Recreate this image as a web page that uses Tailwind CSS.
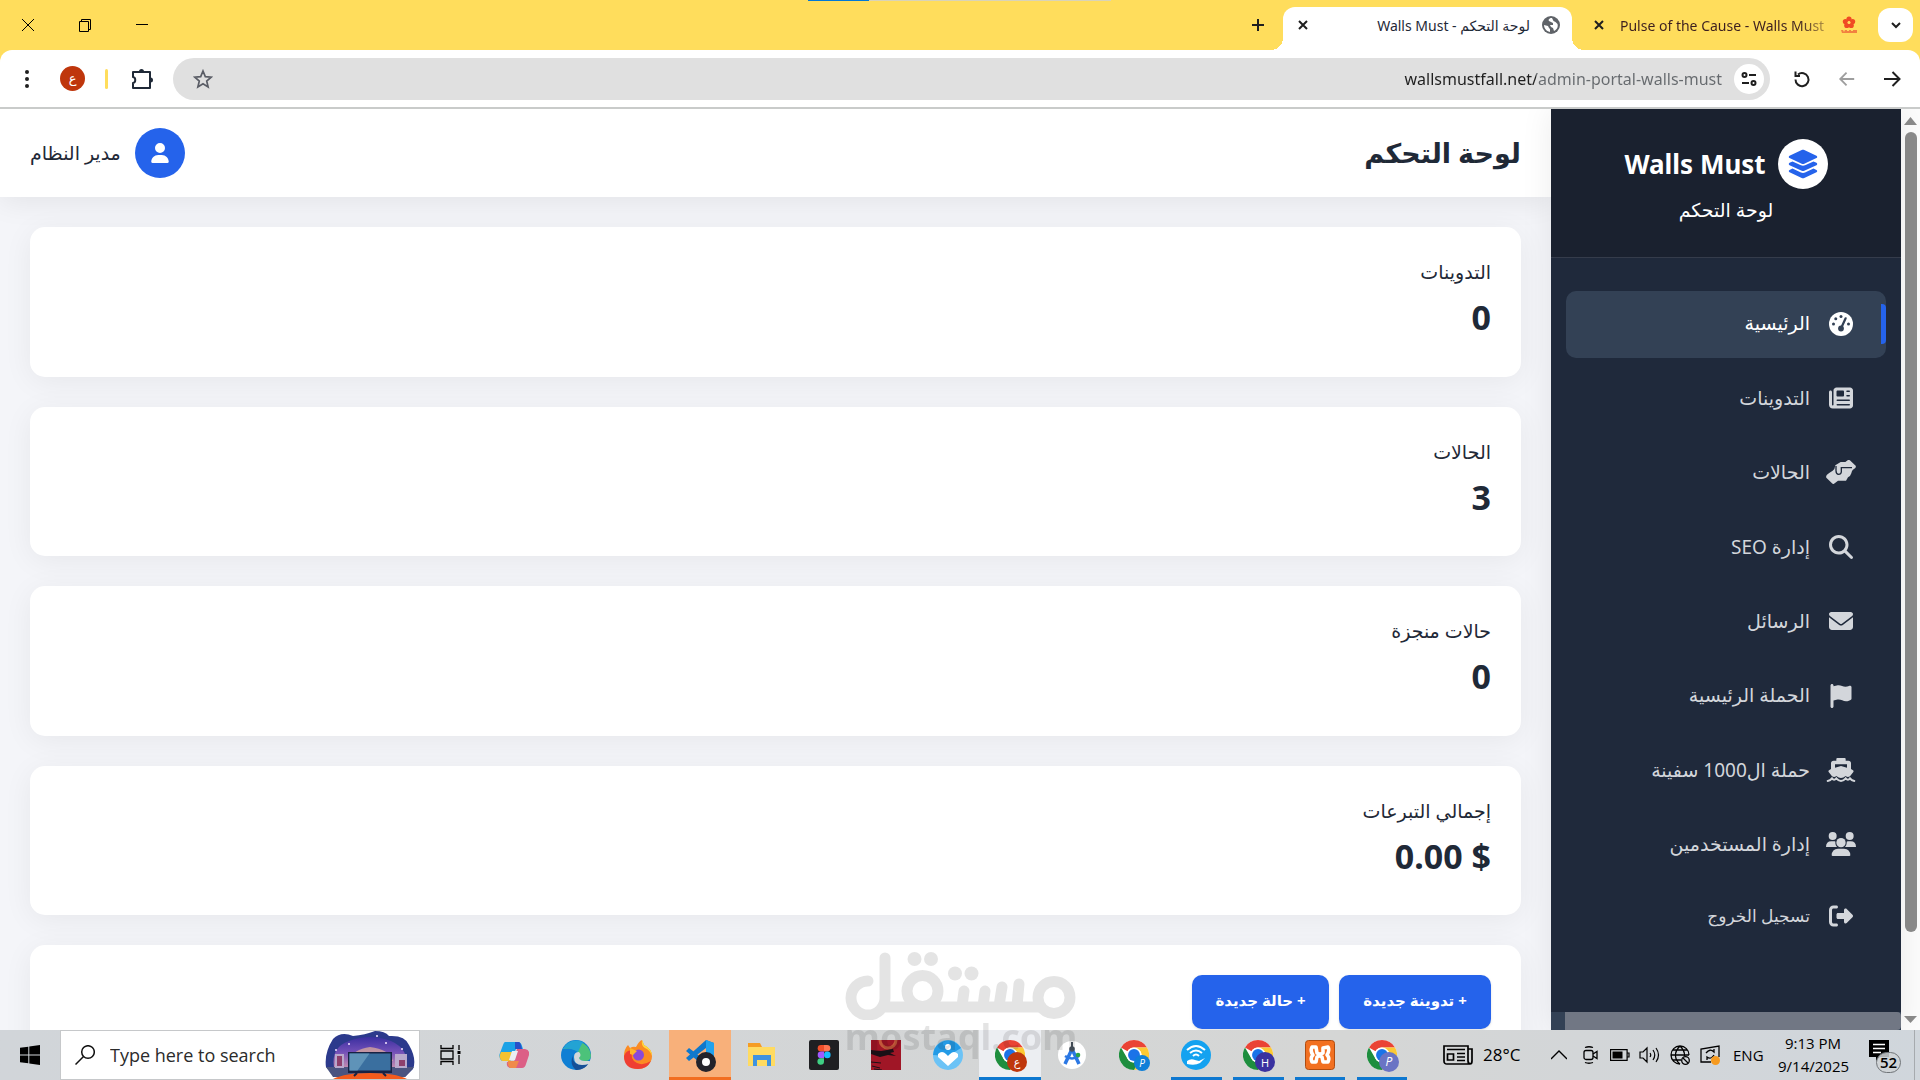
<!DOCTYPE html>
<html lang="ar" dir="rtl">
<head>
<meta charset="utf-8">
<title>لوحة التحكم - Walls Must</title>
<script src="https://cdn.jsdelivr.net/npm/@tailwindcss/browser@4"></script>
</head>
<body class="relative flex h-screen flex-col overflow-hidden bg-white font-['Noto_Sans','DejaVu_Sans',sans-serif] text-[#1f2937]">

<svg class="hidden" aria-hidden="true">
  <symbol id="chrome" viewBox="0 0 48 48">
    <circle cx="24" cy="24" r="24" fill="#fff"/>
    <path d="M24 0A24 24 0 0 1 44.8 12H24A12 12 0 0 0 13.6 18L3.2 12A24 24 0 0 1 24 0Z" fill="#ea4335"/>
    <path d="M44.8 12A24 24 0 0 1 24 48L34.4 30A12 12 0 0 0 34.4 18L24 12Z" fill="#fcc934"/>
    <path d="M24 48A24 24 0 0 1 3.2 12L13.6 30A12 12 0 0 0 34.4 30Z" fill="#1e8e3e"/>
    <circle cx="24" cy="24" r="12" fill="#fff"/><circle cx="24" cy="24" r="9.5" fill="#1a73e8"/>
  </symbol>
</svg>

<!-- Tab strip -->
<header class="relative flex h-[50px] shrink-0 items-center bg-[#ffdd5c]">
  <div class="absolute top-0 left-[808px] flex h-px w-[303px]" dir="ltr"><span class="w-[61px] bg-[#0078d7]"></span><span class="flex-1 bg-[#d9d3b8]"></span></div>
  <button aria-label="Search tabs" class="ms-[7px] grid h-[34px] w-[35px] place-items-center rounded-xl bg-white"><svg class="size-3" viewBox="0 0 12 12" fill="none" stroke="#1f1f1f" stroke-width="2"><path d="M2 4l4 4 4-4"/></svg></button>
  <div class="flex h-full w-[306px] items-center gap-[11px] ps-5 pe-3 text-[14px]">
    <svg class="size-[18px] shrink-0" viewBox="0 0 18 18" fill="#f04a24"><circle cx="9" cy="3" r="2.600"/><circle cx="5.400" cy="5.600" r="2.600"/><circle cx="12.600" cy="5.600" r="2.600"/><circle cx="6.800" cy="9.400" r="2.600"/><circle cx="11.200" cy="9.400" r="2.600"/><circle cx="9" cy="6.600" r="1.500" fill="#ffdd5c"/><path d="M1 14h2l1 2 1-2h2v1h2v-1h2v1h2v-1h4v3H2z" fill="#ef6a3a" opacity=".8"/></svg>
    <span dir="ltr" class="w-[209px] bg-linear-to-r from-[#3c1f1f] from-85% to-[#3c1f1f]/30 bg-clip-text whitespace-nowrap text-transparent">Pulse of the Cause - Walls Must</span>
    <button aria-label="Close tab" class="grid size-5 place-items-center"><svg class="size-[10px]" viewBox="0 0 10 10" stroke="#1f1f1f" stroke-width="2"><path d="M1 1l8 8M9 1l-8 8"/></svg></button>
  </div>
  <div class="relative mt-[7px] flex h-[43px] w-[289px] items-center gap-3 self-start rounded-t-xl bg-white ps-3 pe-[15px] pb-[7px] text-[14px]">
    <span class="absolute -right-3 bottom-0 size-3 bg-[radial-gradient(circle_at_100%_0,transparent_12px,white_12px)]"></span>
    <span class="absolute bottom-0 -left-3 size-3 bg-[radial-gradient(circle_at_0_0,transparent_12px,white_12px)]"></span>
    <svg class="size-[18px]" viewBox="0 0 18 18"><circle cx="9" cy="9" r="9" fill="#5f6368"/><path d="M10 2c-3 0-4 2-3 3l2 1 2 1v2H8l1 2 2 1 1 3c4-2 4-5 3.500-7l-2-2-2-1zM2 9l4 1 1 2 1 1v3c-4-1-6-4-6-7z" fill="#fff"/></svg>
    <span class="whitespace-nowrap">لوحة التحكم - Walls Must</span>
    <button aria-label="Close tab" class="ms-auto grid size-[10px] place-items-center"><svg class="size-[10px]" viewBox="0 0 10 10" stroke="#1f1f1f" stroke-width="2"><path d="M1 1l8 8M9 1l-8 8"/></svg></button>
  </div>
  <button aria-label="New tab" class="ms-[17px] grid size-4 place-items-center"><svg class="size-[14px]" viewBox="0 0 14 14" stroke="#1f1f1f" stroke-width="2"><path d="M7 1v12M1 7h12"/></svg></button>
  <div class="ms-auto me-[21px] flex items-center gap-[43px]">
    <button aria-label="Minimize" class="grid size-[14px] place-items-center"><svg class="size-[14px]" viewBox="0 0 14 14" stroke="#000"><path d="M1 6.500h12"/></svg></button>
    <button aria-label="Restore" class="grid size-[14px] place-items-center"><svg class="size-[14px]" viewBox="0 0 14 14" fill="none" stroke="#000"><path d="M1.500 3.500h9v10h-9zM3.500 3.500v-2h9v10h-2"/></svg></button>
    <button aria-label="Close" class="grid size-[14px] place-items-center"><svg class="size-[14px]" viewBox="0 0 14 14" stroke="#000"><path d="M1 1l12 12M13 1L1 13"/></svg></button>
  </div>
</header>

<!-- Toolbar -->
<div class="shrink-0 bg-[#ffdd5c]">
<div class="flex h-[59px] items-center rounded-t-xl border-b-2 border-[#c9cbca] bg-white ps-[18px] pe-5">
  <button aria-label="Back"><svg class="size-5" viewBox="0 0 20 20" fill="none" stroke="#1f1f1f" stroke-width="2"><path d="M2 10h15M10.500 3l7 7-7 7"/></svg></button>
  <button aria-label="Forward" class="ms-[26px]"><svg class="size-[18px]" viewBox="0 0 20 20" fill="none" stroke="#9e9e9e" stroke-width="2"><path d="M18 10H3M9.500 3l-7 7 7 7"/></svg></button>
  <button aria-label="Reload" class="ms-[27px]"><svg class="size-[18px]" viewBox="0 0 18 18" fill="none" stroke="#1f1f1f" stroke-width="2"><path d="M5 4.500a6.500 6.500 0 1 1-2.500 5M2.500 1.500v4.500H7"/></svg></button>
  <div class="ms-[23px] flex h-[42px] flex-1 items-center rounded-full bg-[#e0e0e0] ps-[6px] pe-5">
    <button aria-label="Site information" class="grid size-[30px] place-items-center rounded-full bg-white"><svg class="size-4" viewBox="0 0 16 16" fill="none" stroke="#1f1f1f" stroke-width="2"><circle cx="3.500" cy="4" r="2"/><path d="M8 4h7M1 12h7"/><circle cx="12.500" cy="12" r="2"/></svg></button>
    <input aria-label="Address" dir="ltr" value="wallsmustfall.net/admin-portal-walls-must" class="mr-3 h-8 min-w-0 flex-1 bg-[linear-gradient(to_left,#666a6e_186px,#1f1f1f_186px)] bg-clip-text text-right text-[16px] text-transparent outline-none">
    <button aria-label="Bookmark"><svg class="size-5" viewBox="0 0 20 20" fill="none" stroke="#5a5d66" stroke-width="1.700"><path d="M10 2l2.300 5.600 5.900.5-4.500 3.900 1.400 5.900L10 14.700 4.900 17.900l1.400-5.900L1.800 8.100l5.900-.5z"/></svg></button>
  </div>
  <button aria-label="Extensions" class="ms-5"><svg class="size-[22px]" viewBox="0 0 22 22" fill="none" stroke="#1f2937" stroke-width="2"><path d="M2 4h17v16H2v-5c3-.5 3-5.500 0-6z" stroke-linejoin="round"/><path d="M9 3.500a1.500 1.500 0 0 1 3 0zM19.500 10.500a1.500 1.500 0 0 1 0 3z"/></svg></button>
  <span class="ms-[23px] h-5 w-[3px] rounded bg-[#ffdd5c]"></span>
  <button aria-label="Profile" class="ms-5 grid size-[25px] place-items-center rounded-full bg-[#bf360c] text-[13px] leading-none text-white">ع</button>
  <button aria-label="Menu" class="ms-[26px]"><svg class="h-5 w-[14px]" viewBox="0 0 14 20" fill="#1f1f1f"><circle cx="7" cy="3" r="2"/><circle cx="7" cy="10" r="2"/><circle cx="7" cy="17" r="2"/></svg></button>
</div>
</div>

<!-- Page -->
<div class="flex min-h-0 flex-1 overflow-hidden">
  <div class="flex w-[19px] shrink-0 flex-col items-center bg-[#fcfcfc] pt-2 pb-[7px]">
    <svg class="h-2 w-[13px]" viewBox="0 0 13 8" fill="#8b8b8b"><path d="M6.500 0L13 8H0z"/></svg>
    <span class="mt-[7px] mb-[84px] w-3 flex-1 rounded-full bg-[#8b8b8b]"></span>
    <svg class="h-[7px] w-[13px]" viewBox="0 0 13 7" fill="#8b8b8b"><path d="M6.500 7L13 0H0z"/></svg>
  </div>

  <aside class="z-10 flex w-[350px] shrink-0 flex-col bg-[#1f293b] text-white shadow-[0_0_30px_rgba(0,0,0,0.08)]">
    <div class="flex h-[149px] shrink-0 flex-col items-center border-b border-[#353c4b] bg-[#1a212f] pt-[30px]">
      <div class="flex h-[50px] items-center gap-3">
        <span class="grid size-[50px] place-items-center rounded-full bg-white"><svg class="h-[30px] w-8" viewBox="0 0 576 512" fill="#2563eb"><path d="M264.500 5.200c14.900-6.900 32.100-6.900 47 0l218.600 101c8.500 3.900 13.900 12.400 13.900 21.800s-5.400 17.900-13.900 21.800l-218.600 101c-14.900 6.900-32.100 6.900-47 0L45.900 149.800C37.400 145.800 32 137.300 32 128s5.400-17.900 13.900-21.800z"/><path id="layer" d="M476.900 209.600l53.200 24.600c8.500 3.900 13.900 12.400 13.900 21.800s-5.400 17.900-13.900 21.800l-218.600 101c-14.900 6.900-32.100 6.900-47 0L45.900 277.800C37.400 273.800 32 265.300 32 256s5.400-17.900 13.900-21.800l53.200-24.600 152 70.200c23.400 10.800 50.400 10.800 73.800 0z"/><use href="#layer" y="128"/></svg></span>
        <span class="text-[26px] font-bold">Walls Must</span>
      </div>
      <p class="mt-[6px] text-[19px] leading-[30px]">لوحة التحكم</p>
    </div>
    <nav class="mt-[33px] flex h-[588px] shrink-0 flex-col justify-between px-[15px] text-[19px] text-[#d3d6db] [&>a]:flex [&>a]:h-[67px] [&>a]:items-center [&>a]:gap-4 [&>a]:rounded-[10px] [&>a]:ps-[30px] [&>a]:pb-[2px] [&_svg]:h-6 [&_svg]:w-[30px]">
      <a href="#" class="relative bg-[#334155] text-white"><span class="absolute top-[13px] right-0 h-10 w-[5px] rounded-s bg-[#2563eb]"></span>
        <svg viewBox="0 0 512 512" fill="#fff"><circle cx="256" cy="256" r="256"/><g fill="#334155"><circle cx="256" cy="96" r="32"/><circle cx="144" cy="144" r="32"/><circle cx="96" cy="256" r="32"/><circle cx="416" cy="256" r="32"/><circle cx="256" cy="352" r="62"/></g><path d="M270 320L355 135" stroke="#334155" stroke-width="48" stroke-linecap="round"/></svg>الرئيسية</a>
      <a href="#"><svg viewBox="0 0 512 512" fill="currentColor"><path d="M96 96c0-35.300 28.700-64 64-64H448c35.300 0 64 28.700 64 64V416c0 35.300-28.700 64-64 64H80c-44.200 0-80-35.800-80-80V128c0-17.700 14.300-32 32-32s32 14.300 32 32V400c0 8.800 7.200 16 16 16s16-7.200 16-16V96zm64 24v80c0 13.300 10.700 24 24 24H296c13.300 0 24-10.700 24-24V120c0-13.300-10.700-24-24-24H184c-13.300 0-24 10.700-24 24zm208-8c0 8.800 7.200 16 16 16h48c8.800 0 16-7.200 16-16s-7.200-16-16-16H384c-8.800 0-16 7.200-16 16zm0 96c0 8.800 7.200 16 16 16h48c8.800 0 16-7.200 16-16s-7.200-16-16-16H384c-8.800 0-16 7.200-16 16zM160 304c0 8.800 7.200 16 16 16H432c8.800 0 16-7.200 16-16s-7.200-16-16-16H176c-8.800 0-16 7.200-16 16zm0 96c0 8.800 7.200 16 16 16H432c8.800 0 16-7.200 16-16s-7.200-16-16-16H176c-8.800 0-16 7.200-16 16z"/></svg>التدوينات</a>
      <a href="#"><svg viewBox="0 0 90 72" fill="currentColor"><path d="M20 32Q27 28 28 16L44 6H58L66 0Q70-1 74 3L89 17Q91 21 87 25L80 30Q77 34 76 40Q74 48 66 52L60 62H36L24 71Q21 73 18 70L1 53Q-1 49 3 44Q10 38 20 32Z"/><path d="M78 23H46V36Q45 43 38 43Q30 42 30 32V18" fill="none" stroke="#1f293b" stroke-width="4"/></svg>الحالات</a>
      <a href="#"><svg viewBox="0 0 512 512" fill="currentColor"><path d="M416 208c0 45.900-14.900 88.300-40 122.700L502.600 457.400c12.500 12.500 12.500 32.800 0 45.300s-32.800 12.500-45.300 0L330.700 376c-34.400 25.200-76.800 40-122.700 40C93.100 416 0 322.900 0 208S93.100 0 208 0S416 93.100 416 208zM208 352a144 144 0 1 0 0-288 144 144 0 1 0 0 288z"/></svg>إدارة SEO</a>
      <a href="#"><svg viewBox="0 0 512 512" fill="currentColor"><path d="M48 64C21.500 64 0 85.500 0 112c0 15.100 7.100 29.300 19.200 38.400L236.800 313.600c11.400 8.500 27 8.500 38.400 0L492.800 150.400c12.100-9.100 19.200-23.300 19.200-38.400c0-26.500-21.500-48-48-48H48zM0 176V384c0 35.300 28.700 64 64 64H448c35.300 0 64-28.700 64-64V176L294.400 339.200c-22.800 17.100-54 17.100-76.800 0L0 176z"/></svg>الرسائل</a>
      <a href="#"><svg viewBox="0 0 448 512" fill="currentColor"><path d="M64 32C64 14.300 49.700 0 32 0S0 14.300 0 32V64 368 480c0 17.700 14.300 32 32 32s32-14.300 32-32V352l64.300-16.100c41.100-10.300 84.600-5.500 122.500 13.400c44.200 22.100 95.500 24.800 141.700 7.400l34.700-13c12.500-4.700 20.800-16.600 20.800-30V66.100c0-23-24.200-38-44.800-27.700l-9.600 4.800c-46.300 23.200-100.800 23.200-147.100 0c-35.100-17.600-75.400-22-113.500-12.500L64 48V32z"/></svg>الحملة الرئيسية</a>
      <a href="#"><svg viewBox="0 0 84 72" fill="currentColor"><path d="M28 8V3Q28 0 31 0H53Q56 0 56 3V8H64Q72 8 72 16V33L78 37Q81 39 79 42L69 55Q62 60 56 54Q49 60 42 60Q35 60 28 54Q22 60 15 55L5 42Q3 39 6 37L12 33V16Q12 8 20 8Z"/><path d="M24 19H60V29L42 24L24 29Z" fill="#1f293b"/><path d="M2 69Q10 68 15 61Q21 69 28 61Q35 69 42 69Q49 69 56 61Q63 69 69 61Q74 68 82 69" fill="none" stroke="currentColor" stroke-width="6" stroke-linecap="round"/></svg>حملة ال1000 سفينة</a>
      <a href="#"><svg viewBox="0 0 90 72" fill="currentColor"><circle cx="20" cy="12" r="12"/><circle cx="71" cy="12" r="12"/><path d="M0 45Q0 28 16 28H26Q30 28 28 33Q28 40 33 45ZM90 45Q90 28 74 28H65Q61 28 62 33Q62 40 57 45Z"/><circle cx="45" cy="32" r="14"/><path d="M17 70Q18 50 36 50H54Q72 50 73 70Q73 72 70 72H20Q17 72 17 70Z"/></svg>إدارة المستخدمين</a>
    </nav>
    <button class="mx-[15px] mt-[15px] flex h-[44px] shrink-0 items-center gap-4 ps-[30px] text-[17px] text-[#d3d6db]"><svg class="h-6 w-[30px]" viewBox="0 0 512 512" fill="currentColor"><path d="M377.900 105.900L500.700 228.700c7.200 7.200 11.300 17.100 11.300 27.300s-4.100 20.100-11.300 27.300L377.900 406.100c-6.400 6.400-15 9.900-24 9.900c-18.700 0-33.900-15.200-33.900-33.900l0-62.100-128 0c-17.700 0-32-14.300-32-32l0-64c0-17.700 14.300-32 32-32l128 0 0-62.100c0-18.700 15.200-33.900 33.900-33.900c9 0 17.600 3.600 24 9.900zM160 96L96 96c-17.700 0-32 14.300-32 32l0 256c0 17.700 14.300 32 32 32l64 0c17.700 0 32 14.300 32 32s-14.300 32-32 32l-64 0c-53 0-96-43-96-96L0 128C0 75 43 32 96 32l64 0c17.700 0 32 14.300 32 32s-14.300 32-32 32z"/></svg>تسجيل الخروج</button>
    <div class="mt-auto h-[18px] shrink-0 bg-[#334155] pe-[14px]"><div class="h-full rounded-s-sm bg-[#717784]"></div></div>
  </aside>

  <main class="flex min-w-0 flex-1 flex-col overflow-hidden bg-[#f4f5f9]">
    <div class="flex h-[88px] shrink-0 items-center justify-between bg-white px-[30px] shadow-[0_4px_30px_rgba(0,0,0,0.08)]">
      <h1 class="text-[27px] font-bold">لوحة التحكم</h1>
      <div class="flex items-center gap-[14px] text-[19px]"><span class="grid size-[50px] place-items-center rounded-full bg-[#2563eb]"><svg class="h-5 w-[18px]" viewBox="0 0 448 512" fill="#fff"><path d="M224 256A128 128 0 1 0 224 0a128 128 0 1 0 0 256zm-45.700 48C79.800 304 0 383.800 0 482.300C0 498.700 13.300 512 29.700 512H418.300c16.400 0 29.700-13.300 29.700-29.700C448 383.800 368.200 304 269.700 304H178.300z"/></svg></span>مدير النظام</div>
    </div>
    <div class="mx-[30px] mt-[30px] grid h-[688px] shrink-0 grid-rows-4 gap-[30px] [&>section]:rounded-[15px] [&>section]:bg-white [&>section]:px-[30px] [&>section]:pt-[30px] [&>section]:shadow-[0_5px_30px_rgba(0,0,0,0.06)] [&_h2]:text-[19px] [&_h2]:leading-[30px] [&_p]:mt-2 [&_p]:text-[34px] [&_p]:leading-[44px] [&_p]:font-bold">
      <section><h2>التدوينات</h2><p>0</p></section>
      <section><h2>الحالات</h2><p>3</p></section>
      <section><h2>حالات منجزة</h2><p>0</p></section>
      <section><h2>إجمالي التبرعات</h2><p><bdi dir="ltr">0.00 $</bdi></p></section>
    </div>
    <section class="mx-[30px] mt-[30px] flex h-[150px] shrink-0 items-start gap-[10px] rounded-[15px] bg-white p-[30px] text-[15px] font-bold text-white shadow-[0_5px_30px_rgba(0,0,0,0.06)]">
      <button class="h-[54px] w-[152px] rounded-[10px] bg-[#2563eb] pb-[3px] shadow">+ تدوينة جديدة</button>
      <button class="h-[54px] w-[137px] rounded-[10px] bg-[#2563eb] pb-[3px] shadow">+ حالة جديدة</button>
    </section>
  </main>
</div>

<!-- Taskbar -->
<footer dir="ltr" class="flex h-[50px] shrink-0 items-stretch bg-linear-to-r from-[#d1d5d9] via-[#d5d6d5] via-70% to-[#d0d6dc] font-['Open_Sans','Noto_Sans',sans-serif] text-black">
  <button aria-label="Start" class="grid w-[60px] place-items-center"><svg class="size-5" viewBox="0 0 20 20"><path d="M0 2.800L8.300 1.700V9.500H0zM9.300 1.500L20 0v9.500H9.300zM0 10.500h8.300v7.800L0 17.200zM9.300 10.500H20V20L9.300 18.500z"/></svg></button>
  <label class="flex w-[360px] items-center border border-[#c6c8ca] bg-white pr-1 pl-[14px]">
    <svg class="size-5 shrink-0" viewBox="0 0 20 20" fill="none" stroke="#111" stroke-width="1.500"><circle cx="13" cy="7" r="6.300"/><path d="M8.500 11.500L0.500 19.500"/></svg>
    <input aria-label="Search" placeholder="Type here to search" class="ml-[15px] min-w-0 flex-1 text-[18px] outline-none placeholder:text-[#2b2b2b]">
    <svg class="h-[48px] w-[90px] shrink-0" viewBox="0 0 90 48"><defs><linearGradient id="sky" x1="0" y1="0" x2="0" y2="1"><stop offset="0" stop-color="#3a2fa0"/><stop offset=".5" stop-color="#7350b8"/><stop offset="1" stop-color="#c08ab0"/></linearGradient></defs><path d="M1 36Q-1 22 8 8Q16 0 28 5Q40 4 50 0Q60 0 64 5Q80 4 84 14Q92 28 88 38L80 46H10Z" fill="#2c3a8c"/><path d="M9 36Q6 16 24 10Q45 2 66 10Q84 18 81 36Z" fill="url(#sky)"/><path d="M24 30Q28 18 45 16Q64 18 68 30Z" fill="#e6b49a" opacity=".7"/><path d="M1 36H89L80 46H8Z" fill="#4a5480"/><path d="M10 23h9v14h-9zM70 23h12v14H70z" fill="#b9a8cc"/><path d="M12 25h5v10h-5zM74 29h6v6h-6z" fill="#8e3f6c"/><path d="M8 48Q20 42 45 42T82 48Z" fill="#f35b1c"/><path d="M23 21h44v21H23z" fill="#182243"/><path d="M24.500 22.500h41v17h-41z" fill="#3a6f9f"/><path d="M24.500 22.500h20l-12 17h-8z" fill="#5f93b8"/><path d="M32 42l-3 3M58 42l3 3" stroke="#182243" stroke-width="2"/><g fill="#f4e4ff"><circle cx="24" cy="13" r="1"/><circle cx="52" cy="5" r="1"/><circle cx="61" cy="12" r="1"/><circle cx="11" cy="19" r="1"/><circle cx="77" cy="18" r="1"/></g></svg>
  </label>
  <button aria-label="Task view" class="grid w-[61px] place-items-center"><svg class="h-5 w-[21px]" viewBox="0 0 21 20" fill="none" stroke="#000" stroke-width="1.300"><path d="M1 0v3.500h12V0M1 6h12v8H1zM1 20v-3.500h12V20M19 0v5M19 10v9"/><path d="M17.500 6h3v3h-3z" fill="#000" stroke="none"/></svg></button>

  <div class="ml-[2px] flex [&>button]:relative [&>button]:grid [&>button]:w-[62px] [&>button]:place-items-center [&_svg]:size-[30px]">
    <button aria-label="Copilot"><svg viewBox="0 0 30 30"><path d="M6 2h13q3 0 4 4l1 3h-7l-6 12H3q-4-3-2-8L4 5q1-3 2-3z" fill="#1ba2e6"/><path d="M2 12h12l-3 9H3q-4-3-1-9z" fill="#f2c230"/><path d="M18 9h8q5 1 4 6l-3 9q-1 4-4 4H11q-4-1-3-6h7z" fill="#dc5f86"/><path d="M9 21h11l-3 7h-6q-3-2-2-7z" fill="#f08a4a"/><path d="M16 2h4q2 1 3 7h-7z" fill="#2850c8"/><path d="M13 11h6l-3 9h-6z" fill="#e9edf2"/></svg></button>
    <button aria-label="Edge"><svg viewBox="0 0 30 30"><circle cx="15" cy="15" r="15" fill="#0f7fd4"/><path d="M2 9A15 15 0 0 1 30 15q0 6-6 6-6 0-6-3 2-3-1-6Q12 7 2 9z" fill="#4cc27a"/><path d="M2 9A15 15 0 0 1 22 2q-3 5-5 10Q10 7 2 9z" fill="#23a3d4"/><path d="M12 15q-2 9 9 10 4 0 7-2a15 15 0 0 1-13 7Q8 24 12 15z" fill="#174f96"/><path d="M18 12q3 3 0 6 1 3 6 3h5l-1 3q-15 4-15-7 0-5 5-5z" fill="#d3d7d9"/></svg></button>
    <button aria-label="Firefox"><svg viewBox="0 0 30 30"><path d="M1 16Q1 9 5 5l2 3q3-2 6-1 3-6 6-7l2 5q8 4 8 11a14 13 0 0 1-28 0z" fill="#fb8b23"/><path d="M1 16q0 13 14 13 9 0 13-8-8 5-14 2-8-4-4-12-6-2-9 5z" fill="#ef3f33"/><path d="M19 0l2 5q8 4 8 11-2-6-7-8-4-2-3-8z" fill="#ffd93b"/><circle cx="15.500" cy="15" r="5.500" fill="#8a49d8"/><path d="M7 8l7 3-4 4-3-1z" fill="#ffb52b"/></svg></button>
    <button aria-label="Visual Studio Code" class="border-b-[3px] border-[#f26e21] bg-[#f8b07a] pt-[3px]"><svg class="overflow-visible" viewBox="0 0 30 30"><path d="M21 0l8 3v22l-8 3L1 11l3-3 17 13V8L4 21l-3-3z" fill="#0f78cc"/><path d="M21 0l8 3v22l-8 3z" fill="#22a2ee"/><circle cx="21" cy="22" r="7" fill="#fff" stroke="#23232b" stroke-width="6"/></svg></button>
    <button aria-label="File Explorer"><svg viewBox="0 0 30 30"><path d="M1 3h12l2 4h13v19H1z" fill="#f59c23"/><path d="M1 7h27v19H1z" fill="#ffdb61"/><path d="M6 15h18v11h-4v-6H10v6H6z" fill="#3f93e0"/></svg></button>
    <button aria-label="Figma"><svg viewBox="0 0 30 30"><rect width="30" height="30" rx="2" fill="#1f1f22"/><path d="M15 5h-3a3.300 3.300 0 0 0 0 6.600h3z" fill="#f04e2a"/><path d="M15 5h3a3.300 3.300 0 0 1 0 6.600h-3z" fill="#ff7350"/><path d="M15 11.600h-3a3.300 3.300 0 0 0 0 6.600h3z" fill="#a259ff"/><circle cx="18.300" cy="14.900" r="3.300" fill="#1abcfe"/><path d="M15 18.200h-3a3.300 3.300 0 1 0 3 3.300z" fill="#3fcf83"/></svg></button>
    <button aria-label="Game"><svg viewBox="0 0 30 30"><path d="M0 0h30v30H0z" fill="#a01626"/><path d="M9 0a8 8 0 0 0 16 0" fill="none" stroke="#c4593a" stroke-width="3"/><path d="M0 10l10 1 12-2 1 3-4 1 6 3-8-1-8 2-9-3z" fill="#1a1016"/><path d="M0 22l10 1M1 26l8 2M3 29l8 1" stroke="#1a1016"/></svg></button>
    <button aria-label="Health app"><svg viewBox="0 0 30 30"><circle cx="15" cy="15" r="15" fill="#6cc3f6"/><path d="M0 15a15 15 0 0 1 28-7L15 16z" fill="#249be6"/><path d="M5 14q4-4 8 0l2 2 2-2q4-4 8 0v3L15 26 5 17z" fill="#fff"/><circle cx="15" cy="7" r="3" fill="#fff"/></svg></button>
    <button aria-label="Chrome" class="border-b-[3px] border-[#0e78d0] bg-[#eceef2] pt-[3px]"><svg><use href="#chrome"/></svg><span class="absolute top-[22px] left-[28px] grid size-5 place-items-center rounded-full bg-[#bf360c] font-['DejaVu_Sans'] text-[11px] leading-none text-white">ع</span></button>
    <button aria-label="Android Studio"><svg viewBox="0 0 30 30"><circle cx="15" cy="15" r="14" fill="#fff"/><path d="M15 9L8 24M15 9l7 15" fill="none" stroke="#2b78e4" stroke-width="3.500"/><path d="M8 16q7 5 14 0" fill="none" stroke="#2b78e4" stroke-width="2.500"/><path d="M15 2v5" stroke="#4a5460" stroke-width="2"/><circle cx="15" cy="9" r="2.800" fill="#4a5460"/><circle cx="21" cy="15" r="2.300" fill="#2ba24c"/></svg></button>
    <button aria-label="Chrome profile P"><svg><use href="#chrome"/></svg><span class="absolute top-[25px] left-[31px] grid size-4 place-items-center rounded-full bg-[#0e7fd8] text-[10px] leading-none text-white italic">P</span></button>
    <button aria-label="Wi-Fi sharing"><svg viewBox="0 0 30 30"><circle cx="15" cy="15" r="15" fill="#14a2f0"/><path d="M6 10q9-8 18 0M9 13q6-5 12 0M12 16q3-3 6 0" fill="none" stroke="#fff" stroke-width="2"/><path d="M6 21q4-3 8-1l4 1 6-3-5 5q-5 3-13 1z" fill="#fff"/></svg><span class="absolute bottom-0 h-[3px] w-[51px] bg-[#0e78d0]"></span></button>
    <button aria-label="Chrome profile H"><svg><use href="#chrome"/></svg><span class="absolute top-[22px] left-[28px] grid size-5 place-items-center rounded-full bg-[#3a32a0] text-[11px] leading-none text-white">H</span><span class="absolute bottom-0 h-[3px] w-[51px] bg-[#0e78d0]"></span></button>
    <button aria-label="XAMPP"><svg viewBox="0 0 30 30"><rect x=".5" y=".5" width="29" height="29" rx="3" fill="#f27021" stroke="#b04c10"/><path d="M7 7h4l1 6q3 2 6 0V8l5-1q2 3-1 8 3 3 1 7h-5l-1-5q-3-2-5 0l-1 5H7q-2-4 1-7-3-4-1-8z" fill="none" stroke="#fff" stroke-width="3.600" stroke-linejoin="round"/></svg><span class="absolute bottom-0 h-[3px] w-[50px] bg-[#0e78d0]"></span></button>
    <button aria-label="Chrome profile P2"><svg><use href="#chrome"/></svg><span class="absolute top-[22px] left-[28px] grid size-5 place-items-center rounded-full bg-[#6a74c4] text-[12px] leading-none text-white italic">P</span><span class="absolute bottom-0 h-[3px] w-[50px] bg-[#0e78d0]"></span></button>
  </div>

  <div class="ml-auto flex items-center text-[16px] whitespace-nowrap">
    <svg class="h-5 w-[30px]" viewBox="0 0 30 20" fill="none" stroke="#000" stroke-width="1.700"><path d="M1 1h24v15q0 3 3 3H4q-3 0-3-3zM25 4h4v12q0 3-2 3"/><path d="M4 4.500h18M14 8.500h8M14 12h8M14 15.500h8M4.500 9h6v6h-6z"/></svg>
    <span class="ml-[10px] w-[68px] text-[17px]">28°C</span>
    <svg class="h-[10px] w-4" viewBox="0 0 16 10" fill="none" stroke="#000" stroke-width="1.300"><path d="M0 9l8-8 8 8"/></svg>
    <svg class="ml-4 h-[18px] w-[15px]" viewBox="0 0 15 18" fill="none" stroke="#000" stroke-width="1.300"><rect x="1" y="4.500" width="9" height="9" rx="2"/><path d="M10 8l4-2.500v7L10 10M2 1.500q4-1.500 8 0M2 16.500q4 1.500 8 0"/></svg>
    <svg class="ml-3 h-3 w-5" viewBox="0 0 20 12"><path d="M.6.600h16.500v10.800H.6zM17 4h2v4h-2" fill="none" stroke="#000" stroke-width="1.200"/><path d="M2.500 2.500h10v7h-10z"/></svg>
    <svg class="ml-[9px] h-[18px] w-[21px]" viewBox="0 0 21 18" fill="none" stroke="#000" stroke-width="1.200"><path d="M1 6h3l4-4v14l-4-4H1zM11 7q1.500 2 0 4M14 4q3.500 5 0 10M17 2q5 7 0 14"/></svg>
    <svg class="ml-[10px] size-5" viewBox="0 0 20 20" fill="none" stroke="#000" stroke-width="1.300"><path d="M19 10a9 9 0 1 0-9 9M1 10h18M2.500 5h15M2.500 15H11M10 1Q5 6 5.500 11T10 19M10 1q5 5 4.500 10"/><circle cx="15.500" cy="15.500" r="3.800"/><path d="M13 13l5 5"/></svg>
    <svg class="ml-[10px] size-5" viewBox="0 0 20 20" fill="none" stroke="#000" stroke-width="1.300"><path d="M11 17L1 17V4l18-3v11M6 8q4-5 8-1V4M14 10q-3 5-7 2v3"/><circle cx="15.500" cy="15.500" r="4.500" fill="#f69a1f" stroke="none"/></svg>
    <span class="ml-[13px] w-[45px] text-[15px]">ENG</span>
    <div class="w-[70px] text-center text-[15px] leading-[23px]"><div>9:13 PM</div><div>9/14/2025</div></div>
    <button aria-label="Notifications" class="relative ml-[21px] flex h-[30px] w-[36px] items-start"><svg class="h-[21px] w-5" viewBox="0 0 20 21"><path d="M0 0h20v17h-9l-4 4v-4H0z"/><path d="M4 4.500h12M4 8.500h12M4 12.500h8" stroke="#fff" stroke-width="1.500"/></svg><span class="absolute top-[12px] left-[7px] grid h-[21px] w-[25px] place-items-center rounded-full border border-[#707478] bg-[#d0d3d6]/85 text-[15px] leading-none font-semibold">52</span></button>
    <span class="ml-[9px] h-full w-[6px] border-l border-[#a6aaae]"></span>
  </div>
</footer>

<!-- Watermark -->
<div dir="ltr" class="pointer-events-none absolute bottom-[21px] left-[44%] z-20 w-[232px] opacity-10">
  <svg class="h-[68px] w-[232px]" viewBox="844 952 232 68" fill="none" stroke="#000" stroke-width="11" stroke-linecap="round" role="img" aria-label="مستقل"><path d="M867 981a17 17 0 1 0 17 17V958M884 1007H1040M963 991l-2 15M984 991l-2 15M1001 987l-3 19M1018 984l-2 22"/><circle cx="921.500" cy="991" r="15.500"/><circle cx="1053" cy="997.500" r="16"/><g fill="#000" stroke="none"><circle cx="913.500" cy="959" r="7"/><circle cx="930" cy="959" r="7"/><circle cx="954" cy="973.500" r="7"/><circle cx="970.500" cy="973.500" r="7"/></g></svg>
  <p class="-mt-[5px] text-center text-[36px] leading-[44px] font-bold text-black">mostaql.com</p>
</div>
</body>
</html>
